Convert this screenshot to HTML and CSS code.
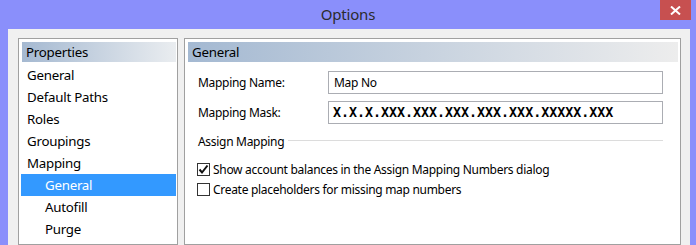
FILE: index.html
```html
<!DOCTYPE html>
<html lang="en">
<head>
    <meta charset="UTF-8">
    <title>Options</title>
    <link rel="stylesheet" href="styles.css">
</head>
<body>
    <div class="window">
        <div class="titlebar">
            <span class="title">Options</span>
            <div class="close">
                <svg width="11" height="9" viewBox="0 0 11 9"><path d="M1 0.5 L10 8.5 M10 0.5 L1 8.5" stroke="#fff" stroke-width="2"/></svg>
            </div>
        </div>
        <div class="content">
            <div class="nav">
                <div class="nav-header">Properties</div>
                <div class="nav-item">General</div>
                <div class="nav-item">Default Paths</div>
                <div class="nav-item">Roles</div>
                <div class="nav-item">Groupings</div>
                <div class="nav-item">Mapping</div>
                <div class="nav-item sub selected">General</div>
                <div class="nav-item sub">Autofill</div>
                <div class="nav-item sub">Purge</div>
            </div>
            <div class="page">
                <div class="page-header">General</div>
                <div class="form">
                    <div class="row">
                        <label class="label">Mapping Name:</label>
                        <div class="textbox">Map No</div>
                    </div>
                    <div class="row">
                        <label class="label">Mapping Mask:</label>
                        <div class="textbox mask">X.X.X.XXX.XXX.XXX.XXX.XXX.XXXXX.XXX</div>
                    </div>
                    <div class="group">
                        <span>Assign Mapping</span>
                        <div class="group-line"></div>
                    </div>
                    <div class="checks">
                        <div class="check">
                            <span class="box">
                                <svg width="11" height="11" viewBox="0 0 11 11"><path d="M1.5 5.5 L4 8.5 L9.5 1.5" fill="none" stroke="#111" stroke-width="2"/></svg>
                            </span>
                            Show account balances in the Assign Mapping Numbers dialog
                        </div>
                        <div class="check">
                            <span class="box"></span>
                            Create placeholders for missing map numbers
                        </div>
                    </div>
                </div>
            </div>
        </div>
    </div>
</body>
</html>
```

FILE: styles.css
```css
body {
    margin: 0;
    background: #8a8ffb;
    font-family: "Noto Sans", sans-serif;
    color: #000;
    overflow: hidden;
}
.window {
    height: 245px;
    display: flex;
    flex-direction: column;
}
.titlebar {
    height: 29px;
    position: relative;
    display: flex;
    justify-content: center;
    align-items: center;
}
.title {
    font-size: 15px;
    color: #2b2b2b;
    margin-top: -2px;
    letter-spacing: -0.2px;
}
.close {
    position: absolute;
    top: 0;
    right: 5px;
    width: 31px;
    height: 20px;
    background: #c75050;
    display: flex;
    justify-content: center;
    align-items: center;
}
.content {
    flex: 1;
    margin: 0 6px 0 8px;
    padding: 9px 9px 0 10px;
    background: #f0f0f0;
    display: flex;
    gap: 6px;
}
.nav {
    width: 155px;
    background: #fff;
    border: 1px solid #a0a0a0;
    padding: 3px 1px 0 2px;
    letter-spacing: -0.25px;
}
.nav-header {
    height: 20px;
    margin-left: 1px;
    padding-left: 4px;
    font-size: 13.3px;
    line-height: 20px;
    background: linear-gradient(to right, #a5b9d1, #eaedf0);
    margin-bottom: 2px;
}
.nav-item {
    height: 22px;
    line-height: 22px;
    font-size: 13.3px;
    padding-left: 6px;
}
.nav-item.sub {
    padding-left: 24px;
}
.nav-item.selected {
    background: #3399ff;
    color: #fff;
}
.page {
    flex: 1;
    background: #fff;
    border: 1px solid #a0a0a0;
    padding: 3px 2px 0 3px;
}
.page-header {
    height: 20px;
    padding-left: 4px;
    font-size: 13.3px;
    line-height: 20px;
    letter-spacing: -0.25px;
    background: linear-gradient(to right, #a4b9d2, #ededed);
}
.form {
    padding: 9px 15px 0 10px;
    font-size: 12px;
    letter-spacing: -0.3px;
}
.row {
    display: flex;
    align-items: center;
    margin-bottom: 7px;
}
.label {
    width: 130px;
}
.textbox {
    flex: 1;
    height: 21px;
    line-height: 21px;
    border: 1px solid #abadb3;
    padding-left: 5px;
}
.textbox.mask {
    font-family: "DejaVu Sans Mono", monospace;
    font-size: 13.3px;
    font-weight: bold;
    letter-spacing: 0;
    padding-left: 4px;
}
.group {
    display: flex;
    align-items: center;
    gap: 4px;
    margin-top: 6px;
    height: 20px;
}
.group-line {
    flex: 1;
    border-top: 1px solid #dcdcdc;
    margin-top: -1px;
}
.checks {
    padding-top: 8px;
}
.check {
    display: flex;
    align-items: center;
    height: 20px;
    gap: 3px;
    margin-left: -1px;
}
.box {
    width: 11px;
    height: 11px;
    border: 1px solid #333;
    background: #fff;
    display: flex;
}
```
